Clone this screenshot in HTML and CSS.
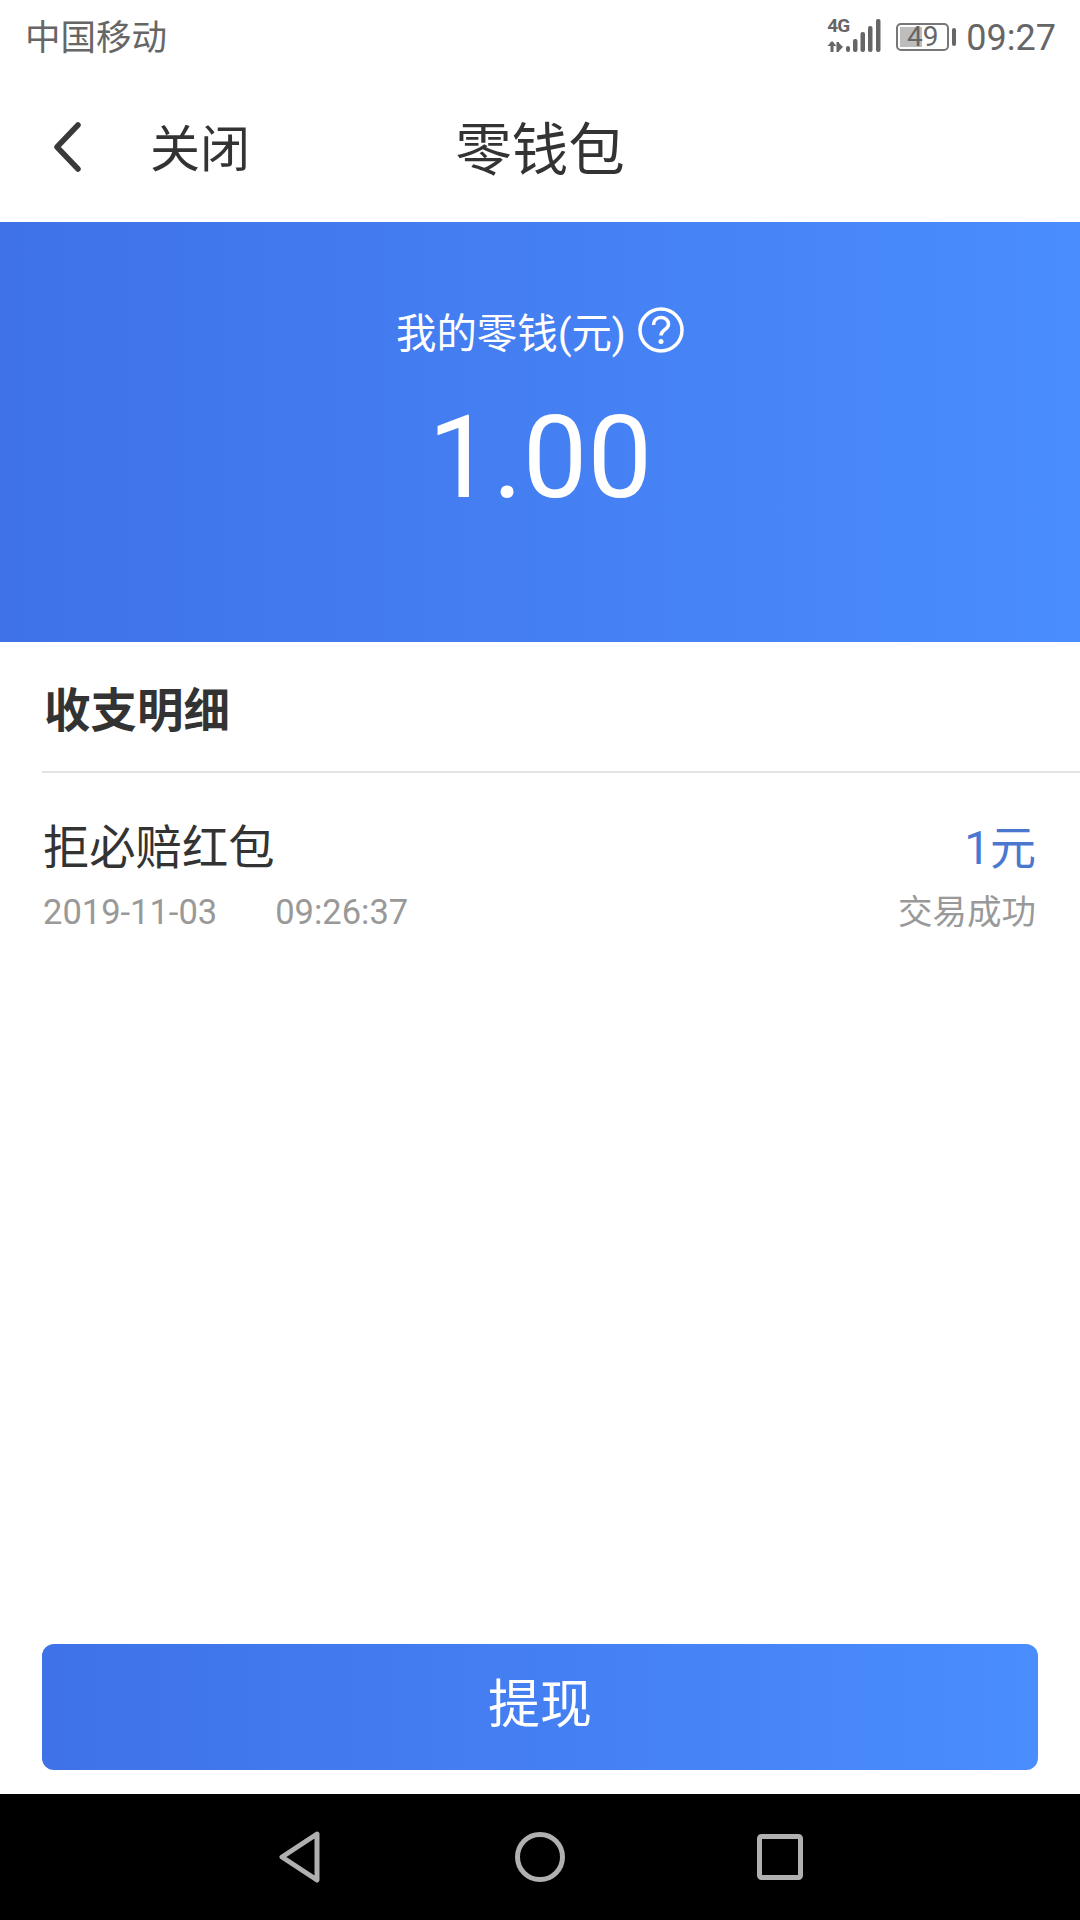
FILE: index.html
```html
<!DOCTYPE html>
<html lang="zh-CN">
<head>
<meta charset="UTF-8">
<meta name="viewport" content="width=device-width, initial-scale=1.0">
<title>零钱包</title>
<link rel="stylesheet" href="styles.css">
</head>
<body>
<div class="status-bar">
  <span class="carrier">中国移动</span>
  <div class="status-right">
    <div class="signal">
      <svg width="54" height="36" viewBox="0 0 54 36">
        <g fill="#666">
          <rect x="19" y="28" width="4" height="6" rx="2"/>
          <rect x="26" y="21" width="4.500" height="13" rx="2"/>
          <rect x="33.500" y="14" width="4.500" height="20" rx="2"/>
          <rect x="41" y="8" width="4.500" height="26" rx="2"/>
          <rect x="49" y="1" width="4.500" height="33" rx="2"/>
          <rect x="3.500" y="24" width="3" height="10"/>
          <path d="M5 23l-4.500 5h9z"/>
          <rect x="9.500" y="24" width="2.500" height="10"/>
          <path d="M11 24l5 5-5 5z"/>
        </g>
      </svg>
      <span class="net">4G</span>
    </div>
    <div class="battery">
      <div class="battery-body">
        <div class="battery-fill"></div>
        <span class="battery-num">49</span>
      </div>
      <div class="battery-cap"></div>
    </div>
    <span class="clock">09:27</span>
  </div>
</div>

<header class="nav-bar">
  <div class="nav-left">
    <svg class="back" width="30" height="50" viewBox="0 0 30 50">
      <path d="M26 3L5 25l21 22" fill="none" stroke="#3a3a3a" stroke-width="5.500" stroke-linecap="round" stroke-linejoin="round"/>
    </svg>
    <span class="close">关闭</span>
  </div>
  <h1 class="title">零钱包</h1>
</header>

<section class="balance">
  <div class="balance-label">
    <span>我的零钱(元)</span>
    <svg width="46" height="46" viewBox="0 0 46 46">
      <circle cx="23" cy="23" r="21" fill="none" stroke="#fff" stroke-width="3.500"/>
      <path d="M15.500 18c0-4.600 3.300-7.500 7.500-7.500s7.500 2.800 7.500 6.700c0 5.300-7.500 5.800-7.500 11.300" fill="none" stroke="#fff" stroke-width="3.500"/>
      <circle cx="23" cy="34.500" r="2.500" fill="#fff"/>
    </svg>
  </div>
  <div class="balance-amount">1.00</div>
</section>

<section class="details">
  <h2 class="details-title">收支明细</h2>
  <div class="record">
    <div class="record-row">
      <span class="record-name">拒必赔红包</span>
      <span class="record-money">1元</span>
    </div>
    <div class="record-row record-sub">
      <span class="record-time"><span>2019-11-03</span><span>09:26:37</span></span>
      <span>交易成功</span>
    </div>
  </div>
</section>

<div class="action">
  <button class="withdraw">提现</button>
</div>

<footer class="sys-nav">
  <svg width="44" height="54" viewBox="0 0 44 54">
    <path d="M39 4L4 27l35 23z" fill="none" stroke="#b0b0b0" stroke-width="5" stroke-linejoin="round"/>
  </svg>
  <svg width="50" height="50" viewBox="0 0 50 50">
    <circle cx="25" cy="25" r="22.500" fill="none" stroke="#b0b0b0" stroke-width="5"/>
  </svg>
  <svg width="46" height="46" viewBox="0 0 46 46">
    <rect x="2.500" y="2.500" width="41" height="41" rx="2" fill="none" stroke="#b0b0b0" stroke-width="5"/>
  </svg>
</footer>
</body>
</html>
```

FILE: styles.css
```css
* {
  box-sizing: border-box;
}
html,
body {
  margin: 0;
  padding: 0;
}
body {
  width: 1080px;
  height: 1920px;
  background-color: #fff;
  color: #333;
  font-family: Roboto, "Noto Sans CJK SC", sans-serif;
  display: flex;
  flex-direction: column;
  overflow: hidden;
}

/* barra de estado */
.status-bar {
  height: 74px;
  padding: 0 24px 0 25px;
  display: flex;
  align-items: center;
  justify-content: space-between;
  color: #666;
}
.carrier {
  font-size: 35.500px;
  line-height: 40px;
  margin-top: 2px;
}
.status-right {
  display: flex;
  align-items: center;
}
.signal {
  position: relative;
  width: 54px;
  height: 36px;
  margin-right: 15px;
  margin-top: -2px;
}
.signal svg {
  display: block;
}
.net {
  position: absolute;
  left: 0;
  top: -1px;
  font-size: 19px;
  line-height: 18px;
  font-weight: 700;
  letter-spacing: -1px;
}
.battery {
  display: flex;
  align-items: center;
  margin-right: 10px;
}
.battery-body {
  position: relative;
  width: 53px;
  height: 28px;
  border: 2px solid #777;
  border-radius: 5px;
  text-align: center;
  font-size: 28px;
  line-height: 24px;
}
.battery-fill {
  position: absolute;
  left: 2px;
  top: 2px;
  bottom: 2px;
  width: 22px;
  background-color: #bdbdbd;
}
.battery-num {
  position: relative;
}
.battery-cap {
  width: 4px;
  height: 18px;
  margin-left: 3px;
  background-color: #666;
  border-radius: 2px;
}
.clock {
  font-size: 36px;
  margin-top: 1px;
}

/* cabecera */
.nav-bar {
  position: relative;
  height: 148px;
  padding-bottom: 6px;
  display: flex;
  align-items: center;
  justify-content: center;
}
.nav-left {
  position: absolute;
  left: 52px;
  top: 0;
  bottom: 6px;
  display: flex;
  align-items: center;
}
.back {
  margin-right: 68px;
  margin-top: 4px;
}
.close {
  font-size: 50px;
}
.title {
  margin: 0;
  font-size: 56.500px;
  font-weight: 400;
}

.balance {
  height: 420px;
  background: linear-gradient(90deg, #3f72e8, #4a8dfd);
  color: #fff;
  display: flex;
  flex-direction: column;
  align-items: center;
  padding-top: 83px;
}
.balance-label {
  display: flex;
  align-items: center;
  gap: 12px;
  font-size: 40.400px;
  height: 50px;
}
.balance-amount {
  font-size: 115px;
  line-height: 136px;
  margin-top: 35px;
}

.details {
  flex-grow: 1;
  padding-left: 42px;
}
.details-title {
  margin: 0;
  height: 131px;
  line-height: 138px;
  padding-left: 2px;
  font-size: 46.500px;
  font-weight: 700;
  border-bottom: 2px solid #e4e4e4;
}
.record {
  padding: 44px 44px 0 1px;
}
.record-row {
  display: flex;
  align-items: center;
  justify-content: space-between;
}
.record-name {
  font-size: 46.300px;
  line-height: 62px;
}
.record-money {
  font-size: 46px;
  line-height: 62px;
  color: #4a78cf;
}
.record-sub {
  margin-top: 9px;
  font-size: 34.500px;
  line-height: 48px;
  color: #999;
}
.record-time {
  display: flex;
  gap: 58px;
}

.action {
  padding: 0 42px 24px;
}
.withdraw {
  display: block;
  width: 100%;
  height: 126px;
  padding: 0 0 14px;
  border: none;
  border-radius: 12px;
  background: linear-gradient(90deg, #3f72e8, #4a8dfd);
  color: #fff;
  font-family: inherit;
  font-size: 52px;
}

.sys-nav {
  height: 126px;
  background-color: #000;
  display: grid;
  grid-template-columns: repeat(3, 240px);
  justify-content: center;
  justify-items: center;
  align-items: center;
}
```
